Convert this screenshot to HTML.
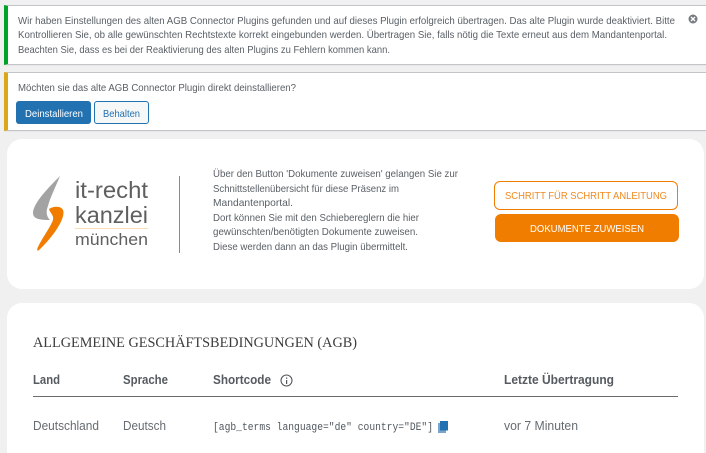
<!DOCTYPE html>
<html lang="de">
<head>
<meta charset="utf-8">
<title>AGB</title>
<style>
html,body{margin:0;padding:0;background:#f0f0f1;width:706px;height:453px;overflow:hidden}
body{position:relative;font-family:"Liberation Sans",sans-serif}
.box{position:absolute;background:#fff;box-sizing:border-box}
.notice{left:4px;width:702px;border:1px solid #c3c4c7;border-left-width:4px;border-right:0;box-shadow:0 1px 1px rgba(0,0,0,.04)}
.card{left:7px;width:697px;background:#fff;border-radius:15px}
svg{position:absolute;left:0;top:0}
</style>
</head>
<body>
<div class="box notice" style="top:5px;height:60px;border-left-color:#00a32a"></div>
<div class="box notice" style="top:72px;height:59px;border-left-color:#dba617"></div>
<div class="box" style="left:16px;top:101px;width:75px;height:23px;background:#2271b1;border-radius:3px"></div>
<div class="box" style="left:94px;top:101px;width:55px;height:23px;background:#f6f7f7;border:1px solid #2271b1;border-radius:3px"></div>
<div class="box card" style="top:139px;height:150px"></div>
<div class="box card" style="top:303px;height:170px"></div>
<div class="box" style="left:494px;top:181px;width:184px;height:29px;border:1px solid #f07d00;border-radius:6px;background:#fff"></div>
<div class="box" style="left:495px;top:214px;width:184px;height:28px;background:#f07d00;border-radius:6px"></div>
<div class="box" style="left:179px;top:176px;width:1px;height:77px;background:#8a8a8a"></div>
<div class="box" style="left:75px;top:228px;width:73px;height:1px;background:#fbdcb5"></div>
<div class="box" style="left:33px;top:396px;width:645px;height:1px;background:#6b6b6b"></div>

<svg width="706" height="453" viewBox="0 0 706 453" xmlns="http://www.w3.org/2000/svg">
<g font-family="Liberation Sans, sans-serif" font-size="10.500" fill="#5a6066">
<text x="18" y="24" textLength="657" lengthAdjust="spacingAndGlyphs">Wir haben Einstellungen des alten AGB Connector Plugins gefunden und auf dieses Plugin erfolgreich übertragen. Das alte Plugin wurde deaktiviert. Bitte</text>
<text x="18" y="38" textLength="649" lengthAdjust="spacingAndGlyphs">Kontrollieren Sie, ob alle gewünschten Rechtstexte korrekt eingebunden werden. Übertragen Sie, falls nötig die Texte erneut aus dem Mandantenportal.</text>
<text x="18" y="53" textLength="372" lengthAdjust="spacingAndGlyphs">Beachten Sie, dass es bei der Reaktivierung des alten Plugins zu Fehlern kommen kann.</text>
<text x="18" y="91" textLength="278" lengthAdjust="spacingAndGlyphs">Möchten sie das alte AGB Connector Plugin direkt deinstallieren?</text>
<text x="25" y="117" textLength="58" lengthAdjust="spacingAndGlyphs" fill="#fff">Deinstallieren</text>
<text x="103" y="117" textLength="37" lengthAdjust="spacingAndGlyphs" fill="#2271b1">Behalten</text>

<text x="213" y="177" textLength="245" lengthAdjust="spacingAndGlyphs">Über den Button 'Dokumente zuweisen' gelangen Sie zur</text>
<text x="213" y="192" textLength="186" lengthAdjust="spacingAndGlyphs">Schnittstellenübersicht für diese Präsenz im</text>
<text x="213" y="206" textLength="80" lengthAdjust="spacingAndGlyphs">Mandantenportal.</text>
<text x="213" y="221" textLength="206" lengthAdjust="spacingAndGlyphs">Dort können Sie mit den Schiebereglern die hier</text>
<text x="213" y="235" textLength="205" lengthAdjust="spacingAndGlyphs">gewünschten/benötigten Dokumente zuweisen.</text>
<text x="213" y="250" textLength="195" lengthAdjust="spacingAndGlyphs">Diese werden dann an das Plugin übermittelt.</text>

<text x="505" y="199" textLength="162" lengthAdjust="spacingAndGlyphs" fill="#f08a20">SCHRITT FÜR SCHRITT ANLEITUNG</text>
<text x="530" y="232" textLength="114" lengthAdjust="spacingAndGlyphs" fill="#fff">DOKUMENTE ZUWEISEN</text>
</g>

<!-- Logo -->
<path d="M60 176C50 186 33 203 33 213C33 219 40 220 50 220C46 216 46 211 48 206C50 198 56 186 60 176Z" fill="#a3a3a3"/>
<path d="M49 209C53 206 63 205 63.500 212C64 222 50 240 38.500 250.500C37 251 37 250 37.500 248C42 238 50 228 53 220C54 215 50 213 49 209Z" fill="#f07d00"/>
<g font-family="Liberation Sans, sans-serif" fill="#5f5f5f">
<text x="75" y="198" font-size="23" textLength="73" lengthAdjust="spacingAndGlyphs">it-recht</text>
<text x="75" y="223" font-size="23" textLength="73" lengthAdjust="spacingAndGlyphs">kanzlei</text>
<text x="75" y="245" font-size="17" textLength="73" lengthAdjust="spacingAndGlyphs">münchen</text>
</g>

<!-- Table -->
<text x="33" y="347" font-family="Liberation Serif, serif" font-size="15" fill="#3c3c3c" textLength="324" lengthAdjust="spacingAndGlyphs">ALLGEMEINE GESCHÄFTSBEDINGUNGEN (AGB)</text>
<g font-family="Liberation Sans, sans-serif" font-size="12.500" font-weight="bold" fill="#555b60">
<text x="33" y="384" textLength="27" lengthAdjust="spacingAndGlyphs">Land</text>
<text x="123" y="384" textLength="45" lengthAdjust="spacingAndGlyphs">Sprache</text>
<text x="213" y="384" textLength="58" lengthAdjust="spacingAndGlyphs">Shortcode</text>
<text x="504" y="384" textLength="110" lengthAdjust="spacingAndGlyphs">Letzte Übertragung</text>
</g>
<g font-family="Liberation Sans, sans-serif" font-size="12.500" fill="#666c71">
<text x="33" y="430" textLength="66" lengthAdjust="spacingAndGlyphs">Deutschland</text>
<text x="123" y="430" textLength="43" lengthAdjust="spacingAndGlyphs">Deutsch</text>
<text x="504" y="430" textLength="74" lengthAdjust="spacingAndGlyphs">vor 7 Minuten</text>
</g>
<text x="213" y="430" font-family="Liberation Mono, monospace" font-size="11" fill="#50575e" textLength="220" lengthAdjust="spacingAndGlyphs">[agb_terms language="de" country="DE"]</text>

<!-- Info icon -->
<circle cx="286.500" cy="380.500" r="5.500" fill="none" stroke="#50575e" stroke-width="1.100"/>
<rect x="286" y="380" width="1.200" height="4" fill="#50575e"/>
<rect x="286" y="377.500" width="1.200" height="1.300" fill="#50575e"/>

<!-- Copy icon -->
<rect x="438" y="423" width="8" height="10" fill="#7ba5cb"/>
<rect x="440" y="421" width="8" height="9.500" fill="#2271b1"/>

<!-- Dismiss icon -->
<circle cx="693" cy="19" r="4.500" fill="#787c82"/>
<path d="M691 17L695 21M695 17L691 21" stroke="#fff" stroke-width="1.300"/>
</svg>
</body>
</html>
